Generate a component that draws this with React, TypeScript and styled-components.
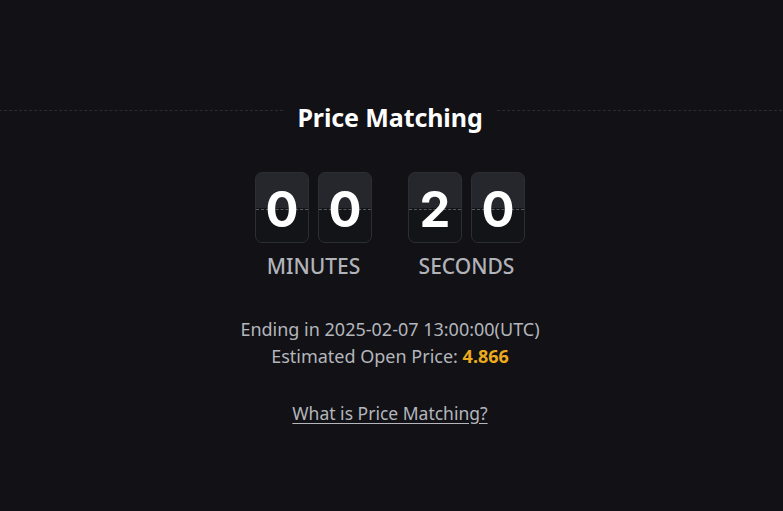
import React from "react";
import styled, { createGlobalStyle } from "styled-components";

const GlobalStyle = createGlobalStyle`
  html, body {
    margin: 0;
    padding: 0;
    background-color: #111116;
  }
  body {
    font-family: "Noto Sans", "Open Sans", sans-serif;
    -webkit-font-smoothing: antialiased;
  }
`

const Page = styled.div`
  min-height: 511px;
  width: 783px;
  background-color: #111116;
  display: flex;
  flex-direction: column;
  align-items: center;
  padding: 101px 3px 0 0;
  box-sizing: border-box;
`

const Header = styled.div`
  width: calc(100% + 3px);
  display: flex;
  align-items: flex-start;
`

const Rule = styled.div`
  flex: 1;
  margin-top: 9px;
  border-top: 1px dashed #2a2c32;
`

const Title = styled.h1`
  margin: 0;
  padding: 0 14px;
  font-size: 25px;
  line-height: 32px;
  font-weight: 700;
  color: #ffffff;
  letter-spacing: -0.1px;
`

const Timer = styled.div`
  display: flex;
  gap: 36px;
  margin-top: 39px;
`

const Unit = styled.div`
  display: flex;
  flex-direction: column;
  align-items: center;
`

const Digits = styled.div`
  display: flex;
  gap: 9px;
`

const Card = styled.div`
  position: relative;
  width: 54px;
  height: 71px;
  box-sizing: border-box;
  border: 1px solid #2c2e34;
  border-radius: 7px;
  background: linear-gradient(to bottom, #25272c 0%, #25272c 50%, #131418 50%, #131418 100%);
  display: flex;
  align-items: center;
  justify-content: center;
  overflow: hidden;
`

const Seam = styled.div`
  position: absolute;
  left: 0;
  right: 0;
  top: 36px;
  border-top: 1px dashed #575a61;
`

const Digit = styled.span`
  position: relative;
  font-family: Inter, "Noto Sans", sans-serif;
  font-size: 49px;
  font-weight: 700;
  line-height: 1;
  color: #ffffff;
  margin-top: 4px;
`

const Label = styled.div`
  margin-top: 11px;
  font-size: 21px;
  line-height: 24px;
  font-weight: 500;
  color: #b1b3b9;
`

const Info = styled.div`
  margin-top: 38px;
  display: flex;
  flex-direction: column;
  align-items: center;
`

const Line = styled.div`
  font-size: 18px;
  line-height: 27px;
  color: #b4b6bc;
`

const Price = styled.span`
  color: #ebab1c;
  font-weight: 700;
`

const Link = styled.a`
  margin-top: 30px;
  font-size: 17.5px;
  line-height: 27px;
  color: #b4b6bc;
  text-decoration: underline;
  text-underline-offset: 3px;
  cursor: pointer;
`

const units = [
  { label: "MINUTES", value: "00" },
  { label: "SECONDS", value: "20" },
];

const App = () => {
  return (
    <>
      <GlobalStyle />
      <Page>
        <Header>
          <Rule />
          <Title>Price Matching</Title>
          <Rule />
        </Header>
        <Timer>
          {units.map((u) => (
            <Unit key={u.label}>
              <Digits>
                {u.value.split("").map((d, i) => (
                  <Card key={i}>
                    <Seam />
                    <Digit>{d}</Digit>
                  </Card>
                ))}
              </Digits>
              <Label>{u.label}</Label>
            </Unit>
          ))}
        </Timer>
        <Info>
          <Line>Ending in 2025-02-07 13:00:00(UTC)</Line>
          <Line>
            Estimated Open Price: <Price>4.866</Price>
          </Line>
        </Info>
        <Link>What is Price Matching?</Link>
      </Page>
    </>
  );
};

export default App;
